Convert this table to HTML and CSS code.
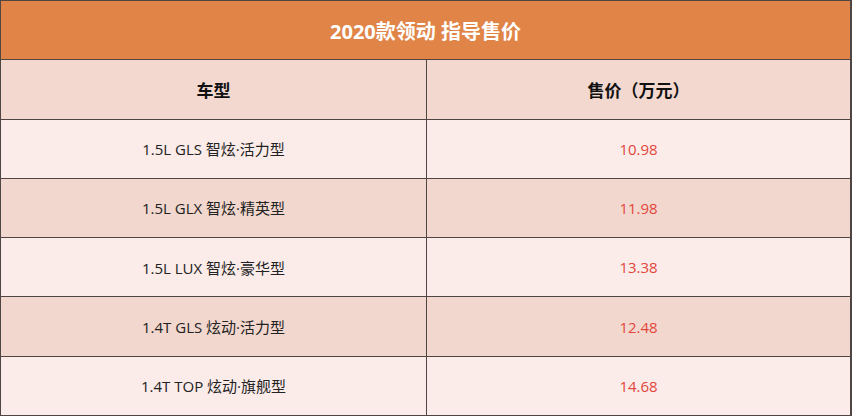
FILE: index.html
```html
<!DOCTYPE html>
<html lang="zh-CN">
<head>
<meta charset="utf-8">
<title>2020款领动 指导售价</title>
<link rel="stylesheet" href="styles.css">
</head>
<body>
<div class="table">
  <div class="cell title">2020款领动 指导售价</div>
  <div class="cell head">车型</div>
  <div class="cell head">售价（万元）</div>
  <div class="cell light">1.5L GLS 智炫·活力型</div>
  <div class="cell light price">10.98</div>
  <div class="cell dark">1.5L GLX 智炫·精英型</div>
  <div class="cell dark price">11.98</div>
  <div class="cell light">1.5L LUX 智炫·豪华型</div>
  <div class="cell light price">13.38</div>
  <div class="cell dark">1.4T GLS 炫动·活力型</div>
  <div class="cell dark price">12.48</div>
  <div class="cell light">1.4T TOP 炫动·旗舰型</div>
  <div class="cell light price">14.68</div>
</div>
</body>
</html>
```
FILE: styles.css
```css
html, body {
  margin: 0;
  padding: 0;
  background: #ffffff;
}
.table {
  width: 852px;
  height: 416px;
  box-sizing: border-box;
  display: grid;
  grid-template-columns: 425px 1fr;
  grid-template-rows: repeat(7, 1fr);
  gap: 1px;
  padding: 1px 2px 1px 1px;
  background: #4f4542;
  font-family: "Open Sans", "Noto Sans CJK SC", sans-serif;
}
.cell {
  display: flex;
  align-items: center;
  justify-content: center;
  font-size: 15px;
  color: #222222;
}
.title {
  grid-column: 1 / span 2;
  background: #e08447;
  color: #ffffff;
  font-size: 20px;
  font-weight: 700;
}
.head {
  background: #f2d8cf;
  font-size: 17px;
  font-weight: 700;
  color: #111111;
}
.light {
  background: #fbecea;
}
.dark {
  background: #f2d7ce;
}
.price {
  color: #e2463c;
}
```
